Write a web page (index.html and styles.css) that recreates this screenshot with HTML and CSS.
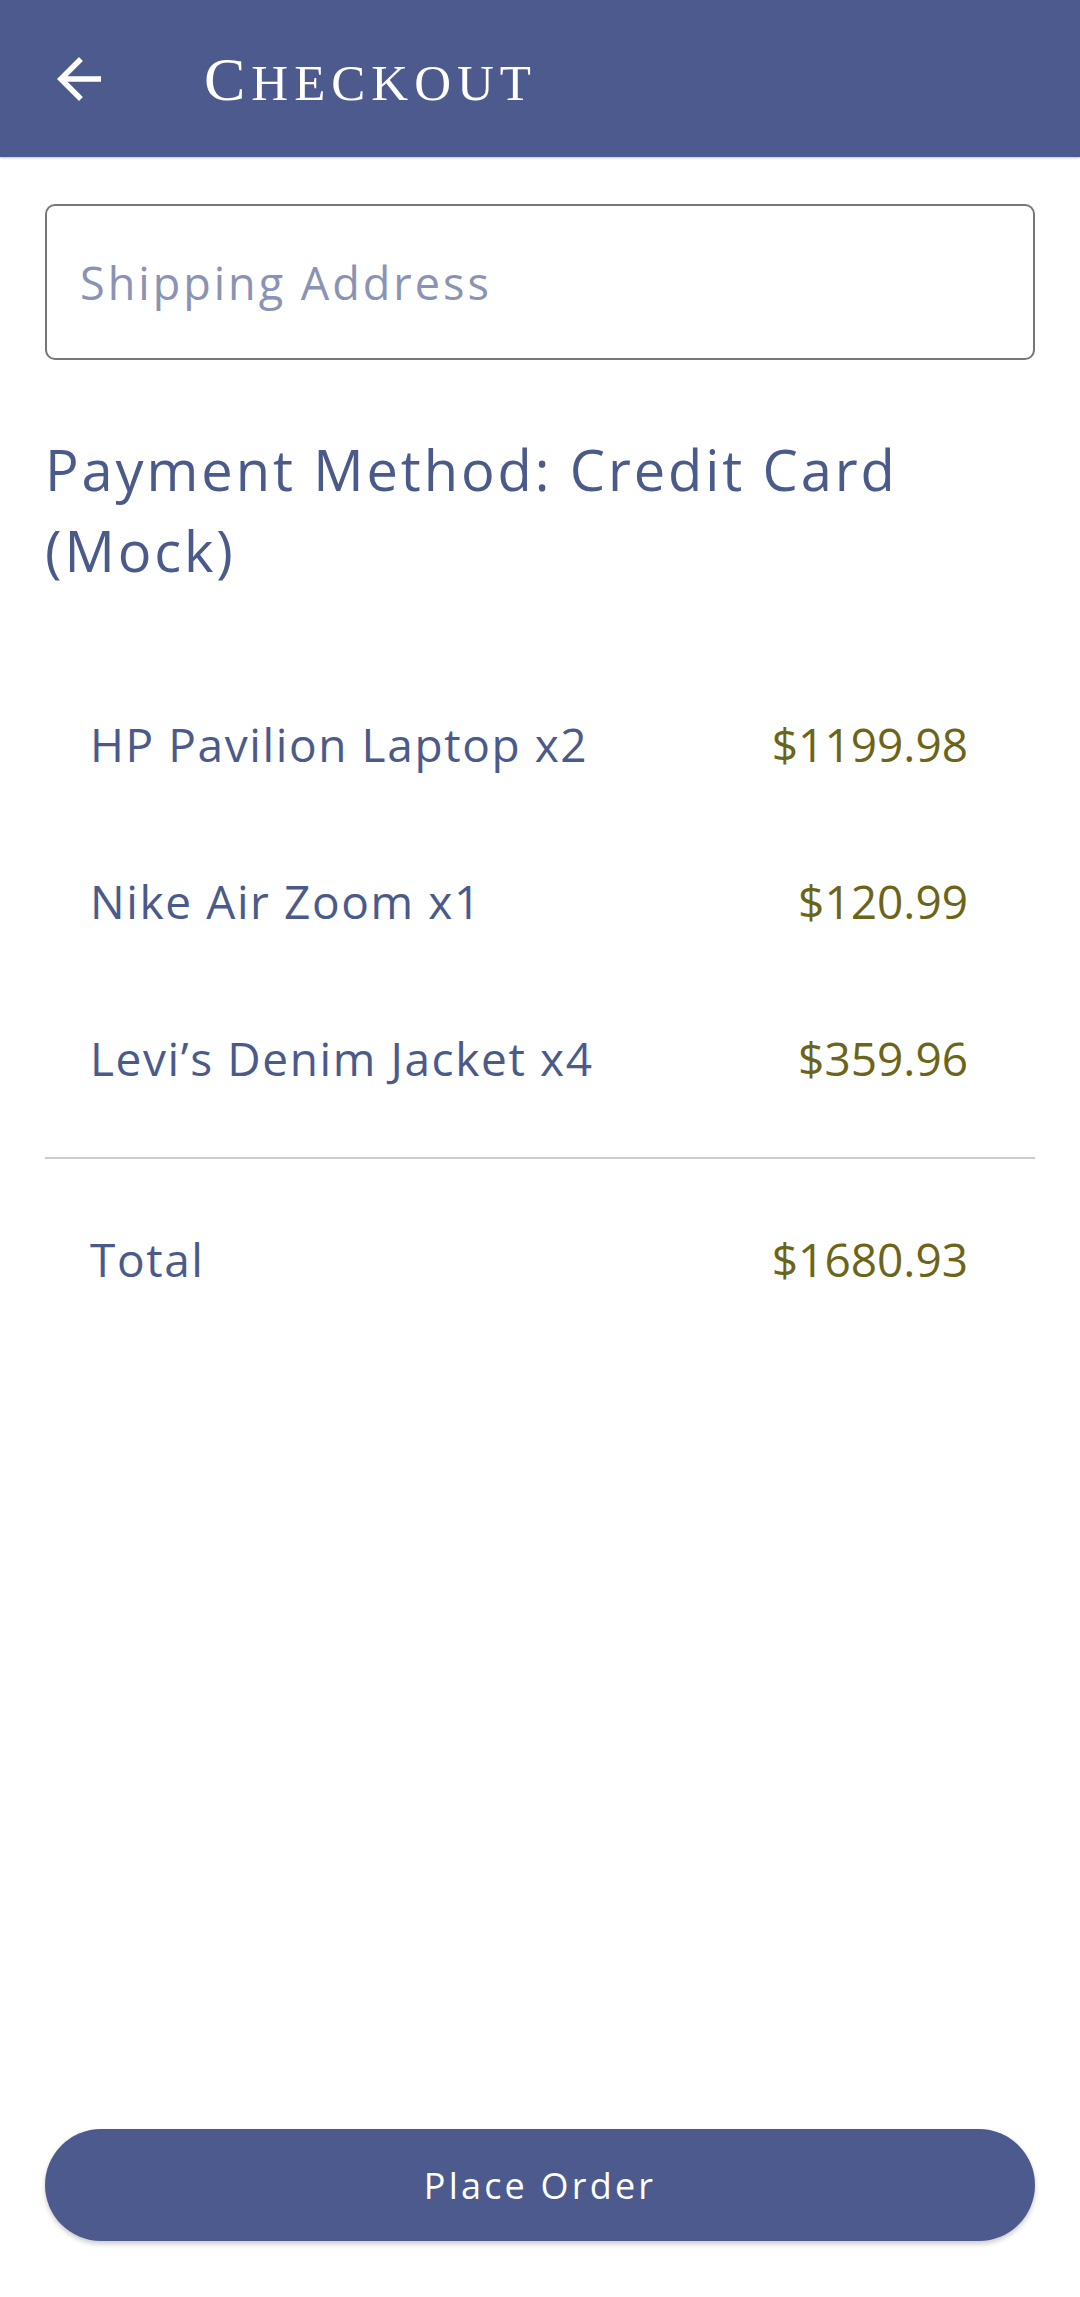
FILE: index.html
```html
<!DOCTYPE html>
<html lang="en">
<head>
<meta charset="utf-8">
<title>Checkout</title>
<link rel="stylesheet" href="styles.css">
</head>
<body>
<div class="screen">
  <header class="appbar">
    <button class="back" aria-label="Back">
      <svg viewBox="0 0 24 24" width="66" height="66"><path d="M20 11H7.83l5.59-5.59L12 4l-8 8 8 8 1.41-1.41L7.83 13H20v-2z" fill="#ffffff"/></svg>
    </button>
    <h1 class="title"><span class="title-initial">C</span><span class="title-rest">heckout</span></h1>
  </header>
  <main class="content">
    <div class="field">
      <input class="field-input" type="text" placeholder="Shipping Address">
    </div>
    <p class="payment">Payment Method: Credit Card<br>(Mock)</p>
    <ul class="items">
      <li class="row"><span class="name">HP Pavilion Laptop x2</span><span class="price">$1199.98</span></li>
      <li class="row"><span class="name">Nike Air Zoom x1</span><span class="price">$120.99</span></li>
      <li class="row"><span class="name">Levi’s Denim Jacket x4</span><span class="price">$359.96</span></li>
    </ul>
    <hr class="divider">
    <div class="row total"><span class="name">Total</span><span class="price">$1680.93</span></div>
    <div class="spacer"></div>
    <button class="place">Place Order</button>
  </main>
</div>
</body>
</html>
```
FILE: styles.css
```css
* { box-sizing: border-box; }
html, body { margin: 0; padding: 0; background: #ffffff; }
body { font-family: "Open Sans", "Noto Sans", sans-serif; }
.screen { width: 1080px; height: 2297px; display: flex; flex-direction: column; }
.appbar {
  height: 157px; flex: none; background: #4c5a8e;
  display: flex; align-items: center;
  box-shadow: 0 1px 2px rgba(0,0,0,0.25);
  position: relative; z-index: 1;
}
.back {
  width: 66px; height: 66px; margin-left: 46px; padding: 0; border: 0; background: none;
  display: flex; align-items: center; justify-content: center;
}
.back svg { display: block; }
.title {
  margin: 0 0 0 92px; color: #ffffff; font-weight: 400;
  font-family: "Liberation Serif", "Times New Roman", serif;
  letter-spacing: 6px; line-height: 1;
}
.title-initial { font-size: 62px; }
.title-rest { font-size: 51px; text-transform: uppercase; }
.content { flex: 1; display: flex; flex-direction: column; padding: 0 45px 56px; }
.field { margin-top: 47px; }
.field-input {
  width: 100%; height: 156px; border: 2.5px solid #777777; border-radius: 10px;
  padding: 0 0 0 33px; font-family: "Open Sans", sans-serif; font-size: 45px;
  letter-spacing: 3px;
  color: #4a5a8b; background: #fff; outline: none;
}
.field-input::placeholder { color: #8a93b3; }
.payment {
  margin: 69px 0 0; font-size: 56px; line-height: 81px; color: #4a5a8b;
  letter-spacing: 2.9px;
}
.items { list-style: none; margin: 74px 0 0; padding: 0; }
.row {
  height: 157px; display: flex; align-items: center; justify-content: space-between;
  padding: 0 67px 0 45px; font-size: 46px;
}
.name { color: #4a5a8b; letter-spacing: 1.6px; }
.price { color: #6b6519; }
.divider { margin: 21px 0; border: 0; height: 2px; background: #cbcbd3; }
.spacer { flex: 1; }
.place {
  height: 112px; width: 100%; border: 0; border-radius: 56px; background: #4c5a8e;
  color: #ffffff; font-family: "Open Sans", sans-serif; font-size: 36px;
  letter-spacing: 3.2px;
  box-shadow: 0 3px 5px rgba(0,0,0,0.2);
}
```
